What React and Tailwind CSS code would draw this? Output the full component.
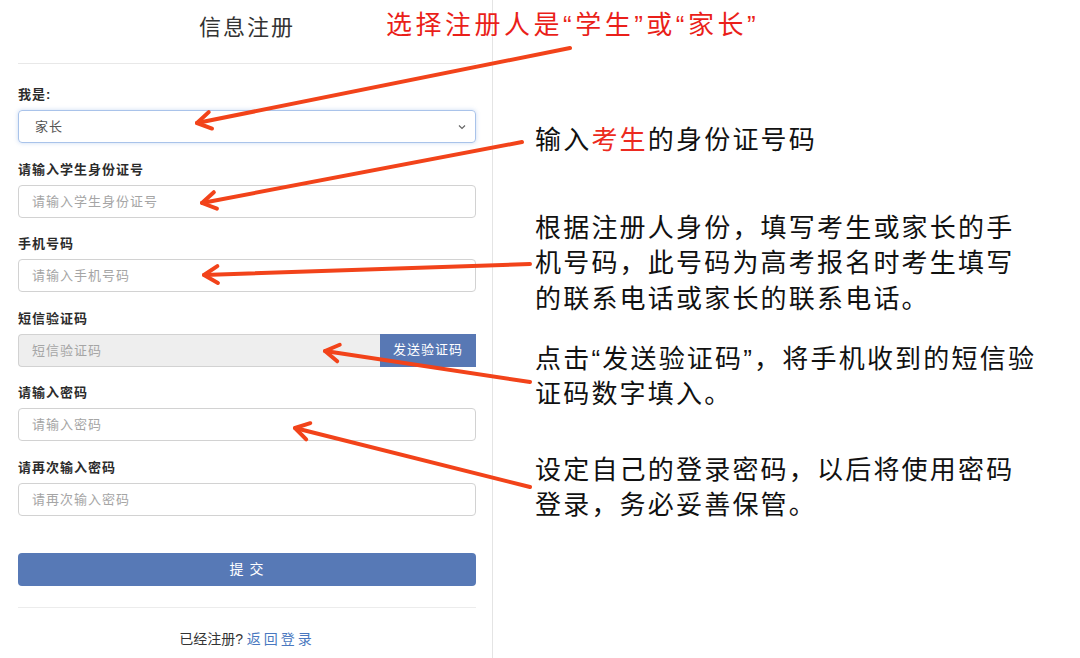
import React from "react";

const arrows = [
  [570, 48, 197, 123],
  [522, 142, 202, 203],
  [530, 264, 204, 275],
  [530, 382, 325, 351],
  [530, 487, 295, 428],
];

const Arrow = ({ x1, y1, x2, y2 }) => {
  const a = Math.atan2(y1 - y2, x1 - x2);
  const len = 16;
  const spread = 0.55;
  const w1 = [x2 + len * Math.cos(a + spread), y2 + len * Math.sin(a + spread)];
  const w2 = [x2 + len * Math.cos(a - spread), y2 + len * Math.sin(a - spread)];
  return (
    <g>
      <path d={`M${x1} ${y1} L${x2} ${y2}`} />
      <path d={`M${w1[0]} ${w1[1]} L${x2} ${y2} L${w2[0]} ${w2[1]}`} />
    </g>
  );
};

const Field = ({ label, children }) => (
  <div className="mb-[16.5px]">
    <div className="h-5 leading-5 mb-[5px] text-[13px] font-bold tracking-[1px] text-[#2b2b2b]">{label}</div>
    {children}
  </div>
);

const inputCls =
  "w-full h-[33px] px-[13px] border border-[#d2d2d2] rounded-[4px] bg-white text-[13px] tracking-[1px] text-[#555] placeholder:text-[#a5a5a5] outline-none";

const App = () => {
  return (
    <div
      className="relative w-[1080px] h-[658px] bg-white flex overflow-hidden"
      style={{ fontFamily: '"Liberation Sans", "Noto Sans CJK SC", sans-serif' }}
    >
      {/* form panel */}
      <div className="w-[493px] h-full border-r border-[#e4e4e4] pl-[18px] pr-[16px] shrink-0">
        <h1 className="pt-[13px] h-[43px] leading-[30px] text-center text-[22px] tracking-[2px] text-[#333]">信息注册</h1>
        <div className="mt-[20px] border-t border-[#e8e8e8]" />
        <div className="mt-[21px]">
          <Field label="我是:">
            <div className="h-[33px] px-[16px] flex items-center justify-between border border-[#a9c3ea] rounded-[4px] shadow-[0_0_4px_rgba(102,150,220,0.35)] text-[13px] tracking-[1px] text-[#555]">
              <span>家长</span>
              <svg width="10" height="10" viewBox="0 0 10 10" className="-mr-[8px]">
                <path d="M2 3.5 L5 6.5 L8 3.5" fill="none" stroke="#666" strokeWidth="1.2" />
              </svg>
            </div>
          </Field>
          <Field label="请输入学生身份证号">
            <input className={inputCls} placeholder="请输入学生身份证号" />
          </Field>
          <Field label="手机号码">
            <input className={inputCls} placeholder="请输入手机号码" />
          </Field>
          <Field label="短信验证码">
            <div className="flex h-[33px]">
              <input
                className="flex-1 min-w-0 h-[33px] px-[13px] border border-[#d2d2d2] border-r-0 rounded-l-[4px] bg-[#eeeeee] text-[13px] tracking-[1px] placeholder:text-[#a5a5a5] outline-none"
                placeholder="短信验证码"
              />
              <button className="w-[96px] h-[33px] bg-[#5878b4] text-white text-[13px] tracking-[1px]">发送验证码</button>
            </div>
          </Field>
          <Field label="请输入密码">
            <input className={inputCls} placeholder="请输入密码" />
          </Field>
          <Field label="请再次输入密码">
            <input className={inputCls} placeholder="请再次输入密码" />
          </Field>
        </div>
        <button className="mt-[21px] w-full h-[33px] rounded-[4px] bg-[#5779b6] text-white text-[14px] tracking-[1px]">提 交</button>
        <div className="mt-[21px] border-t border-[#ececec]" />
        <p className="mt-[21px] leading-5 text-center text-[14px] text-[#333]">
          已经注册? <a className="text-[#4a78c0] tracking-[3px]">返回登录</a>
        </p>
      </div>

      {/* annotations */}
      <div className="pl-[42px] pt-[122.75px] text-[26px] leading-[35.5px] tracking-[2.2px] text-[#111]">
        <p>
          输入<span className="text-[#ec2a20]">考生</span>的身份证号码
        </p>
        <p className="mt-[52.5px]">
          根据注册人身份，填写考生或家长的手
          <br />
          机号码，此号码为高考报名时考生填写
          <br />
          的联系电话或家长的联系电话。
        </p>
        <p className="mt-[24.5px]">
          点击“发送验证码”，将手机收到的短信验
          <br />
          证码数字填入。
        </p>
        <p className="mt-[40px]">
          设定自己的登录密码，以后将使用密码
          <br />
          登录，务必妥善保管。
        </p>
      </div>

      <p className="absolute left-[386px] top-[7px] text-[26px] leading-[36px] tracking-[3.5px] text-[#ea1f1a]">
        选择注册人是“学生”或“家长”
      </p>

      <svg
        className="absolute inset-0 pointer-events-none"
        width="1080"
        height="658"
        fill="none"
        stroke="#f2431a"
        strokeWidth="4"
        strokeLinecap="round"
        strokeLinejoin="round"
      >
        {arrows.map(([x1, y1, x2, y2], i) => (
          <Arrow key={i} x1={x1} y1={y1} x2={x2} y2={y2} />
        ))}
      </svg>
    </div>
  );
};

export default App;
